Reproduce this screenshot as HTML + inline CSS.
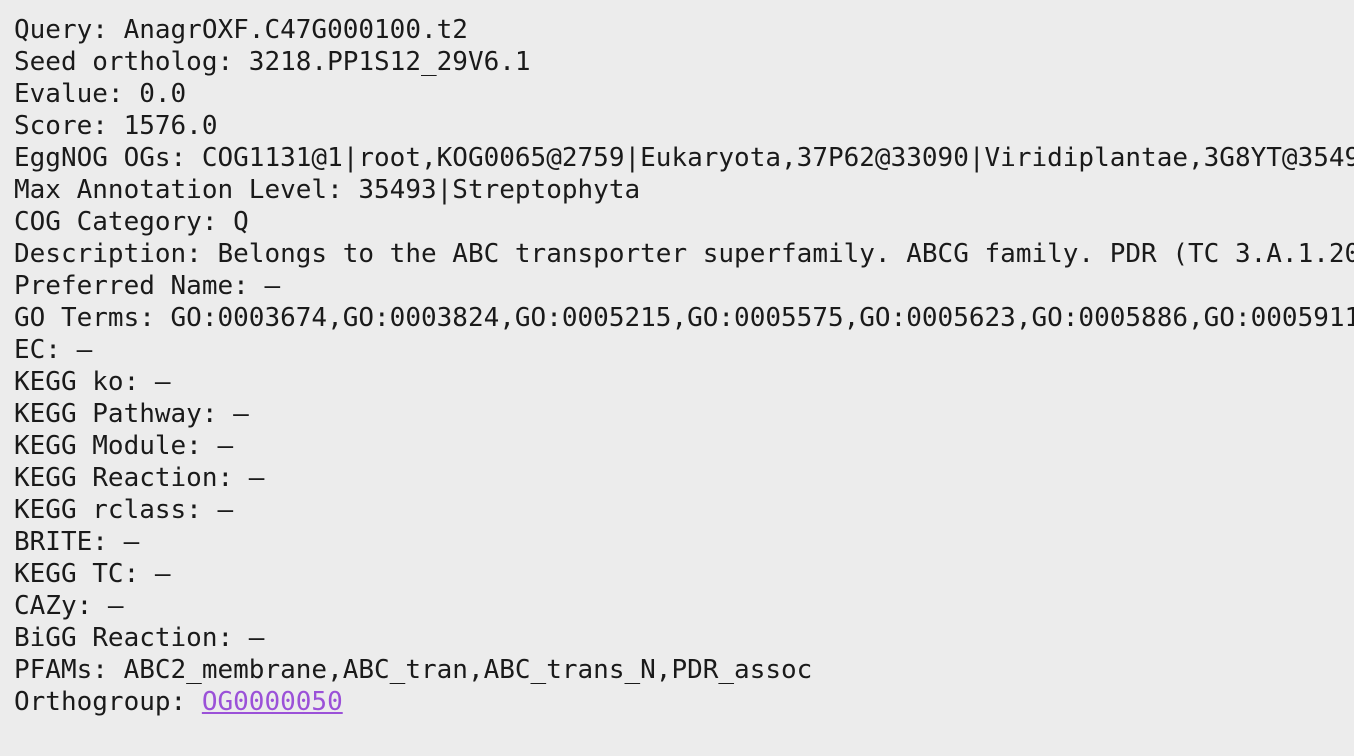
<!DOCTYPE html>
<html><head><style>
html,body{margin:0;padding:0;background:#ececec;width:1354px;height:756px;overflow:hidden}
pre{margin:0;padding:14px 0 0 14px;width:1340px;height:742px;overflow:hidden;font-family:"DejaVu Sans Mono","Liberation Mono",monospace;font-size:26px;line-height:32px;color:#1a1a1a;white-space:pre}
a{color:#9b51d8;text-decoration:underline}
</style></head><body><pre>Query: AnagrOXF.C47G000100.t2
Seed ortholog: 3218.PP1S12_29V6.1
Evalue: 0.0
Score: 1576.0
EggNOG OGs: COG1131@1|root,KOG0065@2759|Eukaryota,37P62@33090|Viridiplantae,3G8YT@35493|Streptophyta
Max Annotation Level: 35493|Streptophyta
COG Category: Q
Description: Belongs to the ABC transporter superfamily. ABCG family. PDR (TC 3.A.1.205) subfamily
Preferred Name: –
GO Terms: GO:0003674,GO:0003824,GO:0005215,GO:0005575,GO:0005623,GO:0005886,GO:0005911
EC: –
KEGG ko: –
KEGG Pathway: –
KEGG Module: –
KEGG Reaction: –
KEGG rclass: –
BRITE: –
KEGG TC: –
CAZy: –
BiGG Reaction: –
PFAMs: ABC2_membrane,ABC_tran,ABC_trans_N,PDR_assoc
Orthogroup: <a>OG0000050</a></pre></body></html>
